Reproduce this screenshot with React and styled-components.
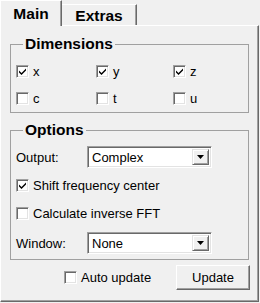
import React from 'react';
import styled, { createGlobalStyle } from 'styled-components';

// css//

const Global = createGlobalStyle`
  body {
    margin: 0;
    background: #f0f0f0;
    font-family: "Liberation Sans", Arial, sans-serif;
    font-size: 13px;
    color: #000;
  }
`;

const Window = styled.div`
  width: 260px;
  height: 303px;
  background: #f0f0f0;
  box-sizing: border-box;
`;

const TabBar = styled.div`
  display: flex;
  align-items: flex-end;
  height: 25px;
`;

const Tab = styled.div`
  box-sizing: border-box;
  display: flex;
  align-items: center;
  justify-content: center;
  font-weight: bold;
  font-size: 15.5px;
  background: #f0f0f0;
  border-top: 1px solid #fff;
  border-left: ${p => (p.$active ? '1px solid #fff' : 'none')};
  border-right: 1px solid #696969;
  box-shadow: inset -1px 0 0 #a0a0a0;
  width: ${p => p.$width}px;
  height: ${p => (p.$active ? 26 : 21)}px;
  margin-bottom: ${p => (p.$active ? -1 : 0)}px;
  padding-top: ${p => (p.$active ? 0 : 1)}px;
  position: relative;
  z-index: 1;
`;

const Panel = styled.div`
  box-sizing: border-box;
  width: 259px;
  height: 277px;
  border-top: 1px solid #fff;
  border-left: 1px solid #fff;
  border-right: 1px solid #696969;
  border-bottom: 1px solid #696969;
  box-shadow: inset -1px -1px 0 #a0a0a0;
  padding: 9px 9px 0 9px;
  display: flex;
  flex-direction: column;
`;

const Group = styled.fieldset`
  margin: 0;
  border: 1px solid #a0a0a0;
  padding: ${p => p.$pad};
  min-width: 0;
  & + & {
    margin-top: 8px;
  }
`;

const Legend = styled.legend`
  font-weight: bold;
  font-size: 15.5px;
  line-height: 18px;
  padding: 0 2px;
  margin-left: 7px;
`;

const CheckGrid = styled.div`
  display: grid;
  grid-template-columns: 80px 77px 1fr;
  grid-auto-rows: 27px;
  align-items: center;
`;

const CheckLabel = styled.label`
  display: flex;
  align-items: center;
  gap: 4px;
  height: 22px;
  line-height: 15px;
`;

const Box = styled.span`
  box-sizing: border-box;
  width: 13px;
  height: 13px;
  background: #fff;
  border-top: 1px solid #a0a0a0;
  border-left: 1px solid #a0a0a0;
  border-right: 1px solid #fff;
  border-bottom: 1px solid #fff;
  box-shadow: inset 1px 1px 0 #696969, inset -1px -1px 0 #e3e3e3;
  display: flex;
  align-items: center;
  justify-content: center;
  flex: none;
`;

const Options = styled.div`
  display: flex;
  flex-direction: column;
  gap: 6px;
`;

const FieldRow = styled.div`
  display: flex;
  align-items: center;
  height: 22px;
  margin-top: ${p => p.$top || 0}px;
`;

const FieldLabel = styled.span`
  width: 71px;
`;

const Select = styled.div`
  box-sizing: border-box;
  width: 125px;
  height: 22px;
  background: #fff;
  border-top: 1px solid #a0a0a0;
  border-left: 1px solid #a0a0a0;
  border-right: 1px solid #fff;
  border-bottom: 1px solid #fff;
  box-shadow: inset 1px 1px 0 #696969, inset -1px -1px 0 #e3e3e3;
  padding: 2px 2px 2px 4px;
  display: flex;
  align-items: center;
  justify-content: space-between;
`;

const DropButton = styled.span`
  box-sizing: border-box;
  width: 17px;
  height: 16px;
  background: #f0f0f0;
  border-top: 1px solid #e3e3e3;
  border-left: 1px solid #e3e3e3;
  border-right: 1px solid #696969;
  border-bottom: 1px solid #696969;
  box-shadow: inset 1px 1px 0 #fff, inset -1px -1px 0 #a0a0a0;
  display: flex;
  align-items: center;
  justify-content: center;
`;

const Footer = styled.div`
  display: flex;
  align-items: center;
  margin-top: 5px;
  padding-left: 54px;
`;

const Button = styled.button`
  box-sizing: border-box;
  margin-left: auto;
  margin-right: -1px;
  width: 74px;
  height: 25px;
  padding: 0;
  font-family: "Liberation Sans", Arial, sans-serif;
  font-size: 13px;
  color: #000;
  background: #f0f0f0;
  border-top: 1px solid #fff;
  border-left: 1px solid #fff;
  border-right: 1px solid #696969;
  border-bottom: 1px solid #696969;
  box-shadow: inset -1px -1px 0 #a0a0a0;
`;

const Check = ({ checked, children }) => (
  <CheckLabel>
    <Box>
      {checked && (
        <svg width="9" height="9" viewBox="0 0 9 9">
          <path d="M1 3.5 L3.5 6 L8 1.5 L8 3.5 L3.5 8 L1 5.5 Z" fill="#000" />
        </svg>
      )}
    </Box>
    {children}
  </CheckLabel>
);

const Dropdown = ({ value }) => (
  <Select>
    <span>{value}</span>
    <DropButton>
      <svg width="7" height="4" viewBox="0 0 7 4">
        <path d="M0 0 H7 L3.5 4 Z" fill="#000" />
      </svg>
    </DropButton>
  </Select>
);

export default function App() {
  return (
    <Window>
      <Global />
      <TabBar>
        <Tab $active $width={62}>Main</Tab>
        <Tab $width={75}>Extras</Tab>
      </TabBar>
      <Panel>
        {/* Dimensions */}
        <Group $pad="5px 0 0 5px">
          <Legend>Dimensions</Legend>
          <CheckGrid>
            <Check checked>x</Check>
            <Check checked>y</Check>
            <Check checked>z</Check>
            <Check>c</Check>
            <Check>t</Check>
            <Check>u</Check>
          </CheckGrid>
        </Group>

        {/* Options */}
        <Group $pad="7px 0 5px 5px">
          <Legend>Options</Legend>
          <Options>
            <FieldRow>
              <FieldLabel>Output:</FieldLabel>
              <Dropdown value="Complex" />
            </FieldRow>
            <Check checked>Shift frequency center</Check>
            <Check>Calculate inverse FFT</Check>
            <FieldRow $top={2}>
              <FieldLabel>Window:</FieldLabel>
              <Dropdown value="None" />
            </FieldRow>
          </Options>
        </Group>

        <Footer>
          <Check>Auto update</Check>
          <Button>Update</Button>
        </Footer>
      </Panel>
    </Window>
  );
}
